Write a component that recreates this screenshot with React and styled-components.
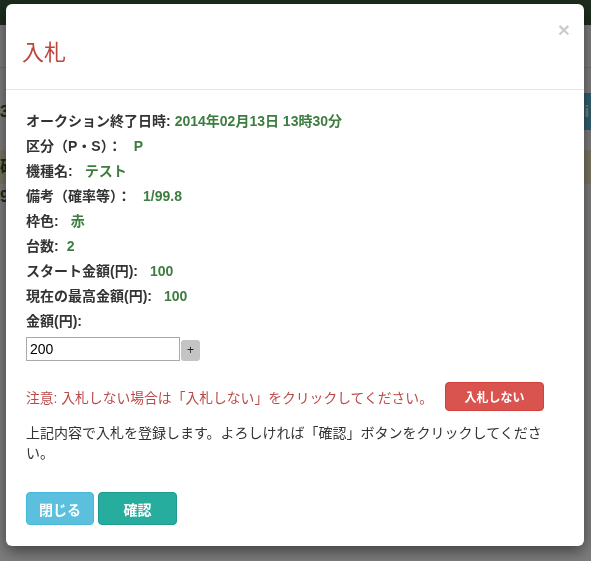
import React from "react"
import styled, { createGlobalStyle } from "styled-components"

const GlobalStyle = createGlobalStyle`
    html, body {
        margin: 0;
        padding: 0;
        background: #fafafa;
        font-family: "Liberation Sans", "Noto Sans CJK JP", sans-serif;
    }
`

const Page = styled.div`
    width: 591px;
    height: 561px;
    overflow: hidden;
    background: #fafafa;
`

const NavBar = styled.nav`
    height: 25px;
    background: #3a593a;
    display: flex;
    align-items: flex-end;
    gap: 40px;
    padding-left: 10px;
    color: #c9d99a;
    font-size: 16px;
    line-height: 18px;
    overflow: hidden;
`

const Rule = styled.div`
    margin-top: 42px;
    border-top: 1px solid #ddd;
`

const TableHead = styled.div`
    display: flex;
    margin-top: 25px;
    height: 37px;
    line-height: 37px;
    font-weight: bold;
`

const HeadCell = styled.div`
    width: ${p => p.w || "auto"};
    flex: ${p => (p.w ? "none" : 1)};
    background: ${p => p.shade};
    color: ${p => p.ink};
    text-align: ${p => p.align || "left"};
    padding-right: 2px;
`

const TableRow = styled.div`
    height: ${p => p.tall}px;
    background: ${p => p.shade};
    color: #2f5b2f;
    font-weight: bold;
    font-size: 16px;
    line-height: ${p => p.tall}px;
`

const Backdrop = styled.div`
    position: fixed;
    inset: 0;
    background: rgba(0, 0, 0, 0.5);
`

const Dialog = styled.div`
    position: relative;
    width: 578px;
    margin: 4px 0 0 6px;
    background: #fff;
    border-radius: 6px;
    box-shadow: 0 5px 15px rgba(0, 0, 0, 0.5);
    color: #333;
`

const Header = styled.div`
    padding: 34px 16px 21px;
    border-bottom: 1px solid #e5e5e5;
`

const Title = styled.h4`
    margin: 0;
    font-size: 22px;
    line-height: 30px;
    font-weight: normal;
    color: #c0443e;
`

const Close = styled.button`
    position: absolute;
    top: 15px;
    right: 14px;
    border: 0;
    background: none;
    padding: 0;
    font-size: 21px;
    font-weight: bold;
    line-height: 1;
    color: #000;
    opacity: 0.2;
    cursor: pointer;
    font-family: "Liberation Sans", sans-serif;
`

const Body = styled.div`
    padding: 19px 20px 0;
`

const Row = styled.div`
    font-size: 14px;
    font-weight: bold;
    line-height: 25px;
    color: #333;
    white-space: nowrap;
`

const Value = styled.span`
    color: #3d7d3f;
    margin-left: ${p => p.gap}px;
`

const InputRow = styled.div`
    display: flex;
    align-items: flex-end;
    margin-top: 3px;
`

const AmountInput = styled.input`
    box-sizing: border-box;
    width: 154px;
    height: 24px;
    border: 1px solid #a9a9a9;
    padding: 0 3px;
    font-size: 14px;
    font-family: "Liberation Sans", sans-serif;
    color: #000;
`

const PlusButton = styled.button`
    width: 19px;
    height: 21px;
    margin-left: 1px;
    border: 0;
    border-radius: 3px;
    background: #c4c4c4;
    padding: 0;
    font-size: 12px;
    line-height: 21px;
    color: #222;
    font-family: "Liberation Sans", sans-serif;
`

const WarnRow = styled.div`
    display: flex;
    align-items: center;
    margin-top: 21px;
`

const Warn = styled.span`
    font-size: 13.8px;
    color: #b94a48;
    white-space: nowrap;
`

const Button = styled.button`
    box-sizing: border-box;
    height: ${p => p.h}px;
    min-width: ${p => p.w}px;
    padding: 0 12px;
    border: 1px solid ${p => p.edge};
    border-radius: 4px;
    background: ${p => p.bg};
    color: #fff;
    font-weight: bold;
    font-size: ${p => p.fs}px;
    font-family: "Liberation Sans", "Noto Sans CJK JP", sans-serif;
    cursor: pointer;
`

const NoBidButton = styled(Button)`
    margin-left: 12px;
`

const Note = styled.p`
    margin: 12px 0 0;
    font-size: 14px;
    line-height: 20px;
    color: #333;
`

const Footer = styled.div`
    display: flex;
    gap: 4px;
    padding: 29px 20px 21px;
`

const App = () => (
    <Page>
        <GlobalStyle />
        <NavBar>
            <span>オークション一覧</span>
            <span>☰ 終了したオークション</span>
            <span>☰ 機種詳細</span>
        </NavBar>
        <Rule />
        <TableHead>
            <HeadCell w="8px" shade="#fafafa" ink="#2f5b2f">3</HeadCell>
            <HeadCell shade="#5bbfda" ink="#fff" align="right">Fi</HeadCell>
        </TableHead>
        <TableRow tall={20} shade="#fafafa" />
        <TableRow tall={34} shade="#f3ecc8">確</TableRow>
        <TableRow tall={26} shade="#fafafa">9</TableRow>
        <Backdrop>
            <Dialog>
                <Header>
                    <Title>入札</Title>
                    <Close>×</Close>
                </Header>
                <Body>
                    <Row>オークション終了日時:<Value gap={4}>2014年02月13日 13時30分</Value></Row>
                    <Row>区分（P・S）：<Value gap={12}>P</Value></Row>
                    <Row>機種名:<Value gap={12}>テスト</Value></Row>
                    <Row>備考（確率等）：<Value gap={12}>1/99.8</Value></Row>
                    <Row>枠色:<Value gap={12}>赤</Value></Row>
                    <Row>台数:<Value gap={8}>2</Value></Row>
                    <Row>スタート金額(円):<Value gap={12}>100</Value></Row>
                    <Row>現在の最高金額(円):<Value gap={12}>100</Value></Row>
                    <Row>金額(円):</Row>
                    <InputRow>
                        <AmountInput defaultValue="200" />
                        <PlusButton>+</PlusButton>
                    </InputRow>
                    <WarnRow>
                        <Warn>注意: 入札しない場合は「入札しない」をクリックしてください。</Warn>
                        <NoBidButton h={29} w={99} fs={12} bg="#d9534f" edge="#d43f3a">入札しない</NoBidButton>
                    </WarnRow>
                    <Note>上記内容で入札を登録します。よろしければ「確認」ボタンをクリックしてください。</Note>
                </Body>
                <Footer>
                    <Button h={33} w={68} fs={14} bg="#5bc0de" edge="#46b8da">閉じる</Button>
                    <Button h={33} w={79} fs={14} bg="#27ad9e" edge="#1f9a8c">確認</Button>
                </Footer>
            </Dialog>
        </Backdrop>
    </Page>
)

export default App
